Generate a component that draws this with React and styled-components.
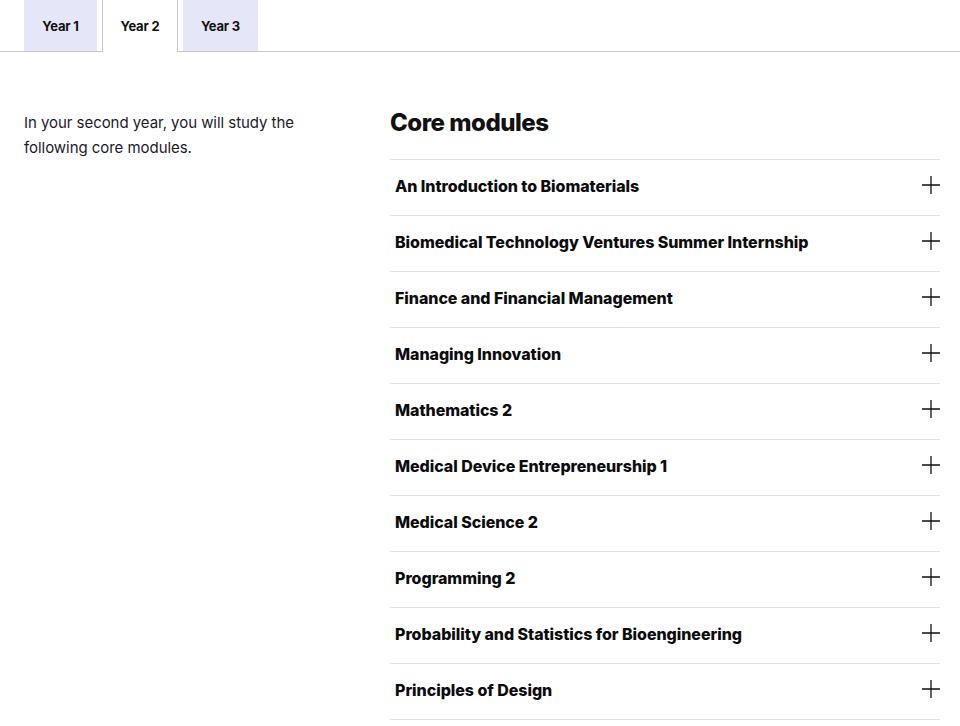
import React, { useState } from 'react';
import styled, { createGlobalStyle } from 'styled-components';

const GlobalStyle = createGlobalStyle`
  body {
    margin: 0;
    background: #fff;
    font-family: Inter, "Noto Sans", Arial, sans-serif;
    color: #1a1a1a;
  }
`;

const TabBar = styled.div`
  display: flex;
  gap: 5px;
  padding-left: 24px;
  height: 51px;
  border-bottom: 1px solid #c8c8c8;
`;

const Tab = styled.button`
  width: ${p => p.w}px;
  height: ${p => (p.active ? 52 : 51)}px;
  border: none;
  border-left: 1px solid ${p => (p.active ? '#c8c8c8' : 'transparent')};
  border-right: 1px solid ${p => (p.active ? '#c8c8c8' : 'transparent')};
  background: ${p => (p.active ? '#fff' : '#e6e6f9')};
  font-family: Inter, Arial, sans-serif;
  font-weight: 700;
  font-size: 13px;
  letter-spacing: -0.2px;
  color: #111;
  cursor: pointer;
  padding: 0;
  position: relative;
  z-index: 1;
`;

const Content = styled.div`
  display: grid;
  grid-template-columns: 366px 550px;
  padding: 55px 0 0 24px;
`;

const Intro = styled.p`
  margin: 3px 0 0;
  font-size: 15px;
  line-height: 25px;
  letter-spacing: -0.05px;
  max-width: 290px;
  color: #1a1a2a;
`;

const Heading = styled.h2`
  margin: 0 0 20px;
  font-size: 24px;
  font-weight: 800;
  letter-spacing: -0.5px;
  line-height: 32px;
  color: #111;
`;

const List = styled.ul`
  list-style: none;
  margin: 0;
  padding: 0;
  border-top: 1px solid #e2e2e2;
`;

const Row = styled.li`
  display: flex;
  align-items: center;
  justify-content: space-between;
  box-sizing: border-box;
  height: 56px;
  border-bottom: 1px solid #e2e2e2;
  padding: 0 0 3px 5px;
  font-size: 16px;
  font-weight: 800;
  letter-spacing: -0.05px;
  color: #0c0c0c;
  cursor: pointer;
`;

const PlusIcon = styled.svg`
  flex: none;
  margin-bottom: 2px;
`;

const Plus = () => (
  <PlusIcon width="18" height="18" viewBox="0 0 18 18">
    <path d="M9 0v18M0 9h18" stroke="#111" strokeWidth="1.3" />
  </PlusIcon>
);

const modules = [
  'An Introduction to Biomaterials',
  'Biomedical Technology Ventures Summer Internship',
  'Finance and Financial Management',
  'Managing Innovation',
  'Mathematics 2',
  'Medical Device Entrepreneurship 1',
  'Medical Science 2',
  'Programming 2',
  'Probability and Statistics for Bioengineering',
  'Principles of Design',
];

export default function App() {
  const [tab, setTab] = useState(1);
  const tabs = [['Year 1', 73], ['Year 2', 76], ['Year 3', 75]];

  return (
    <>
      <GlobalStyle />
      <TabBar>
        {tabs.map(([label, w], i) => (
          <Tab key={label} w={w} active={tab === i} onClick={() => setTab(i)}>
            {label}
          </Tab>
        ))}
      </TabBar>
      <Content>
        <Intro>In your second year, you will study the following core modules.</Intro>
        <div>
          <Heading>Core modules</Heading>
          <List>
            {modules.map(m => (
              <Row key={m}>
                {m}
                <Plus />
              </Row>
            ))}
          </List>
        </div>
      </Content>
    </>
  );
}
